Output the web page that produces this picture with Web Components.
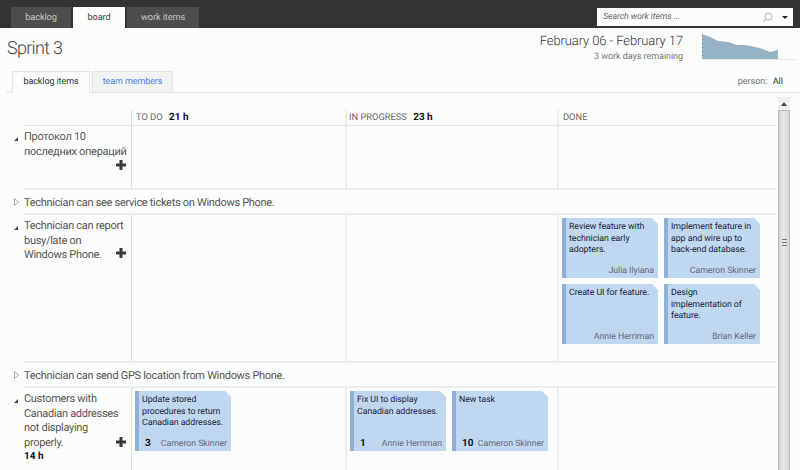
<!DOCTYPE html>
<html>
<head>
<meta charset="utf-8">
<title>Sprint 3</title>
<style>
  html, body { margin: 0; height: 470px; overflow: hidden; }
  body { background: #fbfdfc; font-family: Roboto, "Noto Sans CJK SC", sans-serif; color: #444; text-rendering: geometricPrecision; }
</style>
</head>
<body>
<top-bar></top-bar>
<sprint-header></sprint-header>
<sub-tabs></sub-tabs>
<task-board>
  <board-row open title-text="Протокол 10
последних операций" style="--row-h:62px;--plus-top:34px"></board-row>
  <board-row title-text="Technician can see service tickets on Windows Phone." style="--row-h:23px"></board-row>
  <board-row open title-text="Technician can report
busy/late on
Windows Phone." style="--row-h:146px;--plus-top:33px">
    <task-card slot="done" who="Julia Ilyiana">Review feature with technician early adopters.</task-card>
    <task-card slot="done" who="Cameron Skinner">Implement feature in app and wire up to back-end database.</task-card>
    <task-card slot="done" who="Annie Herriman">Create UI for feature.</task-card>
    <task-card slot="done" who="Brian Keller">Design<br>implementation of feature.</task-card>
  </board-row>
  <board-row title-text="Technician can send GPS location from Windows Phone." style="--row-h:23px"></board-row>
  <board-row open hours="14 h" title-text="Customers with
Canadian addresses
not displaying
properly." style="--row-h:90px;--plus-top:49px">
    <task-card slot="todo" who="Cameron Skinner" hours="3">Update stored procedures to return Canadian addresses.</task-card>
    <task-card slot="progress" who="Annie Herriman" hours="1">Fix UI to display Canadian addresses.</task-card>
    <task-card slot="progress" who="Cameron Skinner" hours="10">New task</task-card>
  </board-row>
</task-board>

<script>
class TopBar extends HTMLElement {
  constructor() {
    super();
    this.attachShadow({ mode: 'open' });
    this.shadowRoot.innerHTML = `
      <style>
        :host { display: flex; height: 28px; background: #323433; padding-left: 11px; padding-right: 7px; box-sizing: border-box; align-items: flex-end; font-size: 9.2px; letter-spacing: -0.1px; }
        nav { display: flex; gap: 2px; }
        a { height: 21px; line-height: 21px; text-align: center; background: #4c4e4d; color: #c4c6c5; }
        a.on { background: #fbfdfc; color: #444; }
        .search { margin-left: auto; align-self: flex-start; margin-top: 8px; width: 196px; height: 18px; box-sizing: border-box; background: #fbfdfc; display: flex; align-items: center; padding: 0 5px 0 6px; font-style: italic; color: #666; font-size: 8.8px; }
        .search svg { margin-left: auto; }
        .caret { margin-left: 9px; width: 0; height: 0; border: 3px solid transparent; border-top: 3px solid #222; border-bottom: 0; }
      </style>
      <nav>
        <a style="width:60px">backlog</a>
        <a class="on" style="width:52px">board</a>
        <a style="width:72px">work items</a>
      </nav>
      <div class="search">
        <span>Search work items ...</span>
        <svg width="11" height="11" viewBox="0 0 11 11" fill="none" stroke="#c6c8c7" stroke-width="1.2"><circle cx="6.5" cy="4.5" r="3.4"/><path d="M4 7L1 10"/></svg>
        <span class="caret"></span>
      </div>`;
  }
}

class SprintHeader extends HTMLElement {
  constructor() {
    super();
    this.attachShadow({ mode: 'open' });
    this.shadowRoot.innerHTML = `
      <style>
        :host { display: flex; height: 41px; padding-left: 7px; padding-right: 4px; box-sizing: border-box; }
        h1 { margin: 9px 0 0; font-size: 18px; line-height: 24px; font-weight: 300; letter-spacing: -0.7px; color: #444; }
        .dates { margin-left: auto; text-align: right; margin-top: 5px; margin-right: 19px; }
        .range { font-size: 13px; line-height: 18px; font-weight: 300; letter-spacing: -0.1px; color: #333; }
        .left { font-size: 9px; line-height: 13px; letter-spacing: -0.05px; color: #777; }
        svg { display: block; margin-top: 6px; }
      </style>
      <h1>Sprint 3</h1>
      <div class="dates">
        <div class="range">February 06 - February 17</div>
        <div class="left">3 work days remaining</div>
      </div>
      <svg width="94" height="26" viewBox="0 0 94 26">
        <path d="M0 0L8 3L16 7L26 8L35 11L43 11L58 14L68 18L76 16V25H0Z" fill="#96b3c5"/>
        <path d="M0 25.5H94" stroke="#e6e8e7"/>
        <path d="M0.5 1V25" stroke="#777" stroke-dasharray="1 3"/>
      </svg>`;
  }
}

class SubTabs extends HTMLElement {
  constructor() {
    super();
    this.attachShadow({ mode: 'open' });
    this.shadowRoot.innerHTML = `
      <style>
        :host { display: flex; height: 23px; margin-left: 6px; border-bottom: 1px solid #e3e5e4; align-items: flex-end; font-size: 9px; }
        a { box-sizing: border-box; text-align: center; line-height: 20px; border: 1px solid #e3e5e4; border-bottom: 0; }
        .on { width: 78px; height: 22px; margin-left: 6px; margin-bottom: -1px; background: #fbfdfc; color: #333; border-bottom: 1px solid #fbfdfc; letter-spacing: -0.1px; }
        .off { width: 81px; height: 21px; margin-left: 2px; background: #f2f4f4; color: #4a7fe0; letter-spacing: -0.1px; }
        .who { margin-left: auto; margin-right: 17px; margin-bottom: 3px; color: #777; line-height: 14px; }
        b { font-weight: 400; color: #333; margin-left: 3px; }
      </style>
      <a class="on">backlog items</a>
      <a class="off">team members</a>
      <span class="who">person: <b>All</b></span>`;
  }
}

class TaskBoard extends HTMLElement {
  constructor() {
    super();
    this.attachShadow({ mode: 'open' });
    this.shadowRoot.innerHTML = `
      <style>
        :host { display: flex; height: 377px; padding-left: 24px; padding-right: 10px; overflow: hidden; }
        .main { width: 752px; }
        .head { display: grid; grid-template-columns: 107px 214px 212px 219px; height: 33px; box-sizing: border-box; padding-top: 17px; border-bottom: 1px solid #e3e5e4; font-size: 9.3px; color: #666; }
        .head div { border-left: 2px solid #eceeed; padding-left: 2px; line-height: 15px; }
        .head div:first-child { border: 0; }
        .head div:nth-child(2) { border-left: 1px solid #dcdedd; padding-left: 4px; }
        .head div:nth-child(4) { padding-left: 4px; }
        .head b { color: #111; margin-left: 4px; font-weight: 700; font-size: 10px; }
        .bar { width: 12px; margin-left: 2px; margin-top: 4px; display: flex; flex-direction: column; background: #f0f1f1; }
        .up { height: 13px; background: #eef0f0; display: flex; align-items: center; justify-content: center; }
        .up i { width: 0; height: 0; border: 3px solid transparent; border-bottom: 4px solid #444; border-top: 0; }
        .thumb { flex: 1; background: linear-gradient(90deg, #cfd1d1, #e8eaea 40%, #d4d6d6); border: 1px solid #b9bbbb; border-bottom: 0; display: flex; justify-content: center; padding-top: 128px; }
        .thumb i { width: 5px; height: 5px; border-top: 1px solid #777; border-bottom: 1px solid #777; position: relative; }
        .thumb i::after { content: ""; position: absolute; left: 0; right: 0; top: 2px; height: 1px; background: #777; }
      </style>
      <div class="main">
        <div class="head">
          <div></div>
          <div>TO DO <b>21 h</b></div>
          <div>IN PROGRESS <b>23 h</b></div>
          <div>DONE</div>
        </div>
        <slot></slot>
      </div>
      <div class="bar">
        <div class="up"><i></i></div>
        <div class="thumb"><i></i></div>
      </div>`;
  }
}

class BoardRow extends HTMLElement {
  constructor() {
    super();
    this.attachShadow({ mode: 'open' });
  }
  connectedCallback() {
    const open = this.hasAttribute('open');
    const title = this.getAttribute('title-text');
    const hours = this.getAttribute('hours');
    const style = `
      <style>
        :host { display: block; position: relative; height: var(--row-h); border-bottom: 2px solid #eceeed; font-size: 11px; letter-spacing: -0.3px; color: #555; line-height: 14.5px; }
        .tri { position: absolute; left: -10px; top: 11px; }
        .tri.closed { top: 8px; }
        .grid { display: grid; grid-template-columns: 107px 214px 212px 219px; height: 100%; }
        .title { padding-right: 3px; padding-top: 4px; position: relative; white-space: pre-line; }
        .cell { border-left: 2px solid #eceeed; padding: 3px 0 0 3px; display: flex; flex-wrap: wrap; gap: 6px; align-content: flex-start; }
        .cell.first { border-left: 1px solid #dcdedd; padding-left: 3px; }
        .plus { position: absolute; right: 5px; top: var(--plus-top, 36px); }
        b { display: block; font-size: 10px; letter-spacing: 0; color: #111; }
        .flat { white-space: nowrap; padding-top: 6px; }
      </style>`;
    if (!open) {
      this.shadowRoot.innerHTML = style + `
        <svg class="tri closed" width="5" height="8" viewBox="0 0 5 8"><path d="M0.5 0.5L4.5 4L0.5 7.5Z" fill="none" stroke="#aaa"/></svg>
        <div class="flat">${title}</div>`;
      return;
    }
    this.shadowRoot.innerHTML = style + `
      <svg class="tri" width="4" height="4" viewBox="0 0 4 4"><path d="M4 0V4H0Z" fill="#444"/></svg>
      <div class="grid">
        <div class="title">${title}${hours ? `<b>${hours}</b>` : ''}<svg class="plus" width="10" height="10" viewBox="0 0 10 10"><path d="M3.5 0H6.5V3.5H10V6.5H6.5V10H3.5V6.5H0V3.5H3.5Z" fill="#3a3a3a"/></svg></div>
        <div class="cell first"><slot name="todo"></slot></div>
        <div class="cell"><slot name="progress"></slot></div>
        <div class="cell"><slot name="done"></slot></div>
      </div>`;
  }
}

class TaskCard extends HTMLElement {
  constructor() {
    super();
    this.attachShadow({ mode: 'open' });
  }
  connectedCallback() {
    const hours = this.getAttribute('hours');
    this.shadowRoot.innerHTML = `
      <style>
        :host { display: flex; flex-direction: column; width: 96px; height: 60px; box-sizing: border-box; padding: 4px 4px 0 3px; border-left: 4px solid #8fb0d2; background: #c0d7f0; clip-path: polygon(0 0, calc(100% - 6px) 0, 100% 6px, 100% 100%, 0 100%); font-size: 8.8px; letter-spacing: -0.05px; line-height: 11.7px; color: #223; }
        .text { flex: 1; }
        .foot { display: flex; align-items: baseline; justify-content: flex-end; color: #667; white-space: nowrap; line-height: 14px; }
        b { margin-right: auto; color: #111; font-size: 10px; padding-left: 3px; }
      </style>
      <div class="text"><slot></slot></div>
      <div class="foot">${hours ? `<b>${hours}</b>` : ''}<span>${this.getAttribute('who')}</span></div>`;
  }
}

customElements.define('top-bar', TopBar);
customElements.define('sprint-header', SprintHeader);
customElements.define('sub-tabs', SubTabs);
customElements.define('task-board', TaskBoard);
customElements.define('board-row', BoardRow);
customElements.define('task-card', TaskCard);
</script>
</body>
</html>
